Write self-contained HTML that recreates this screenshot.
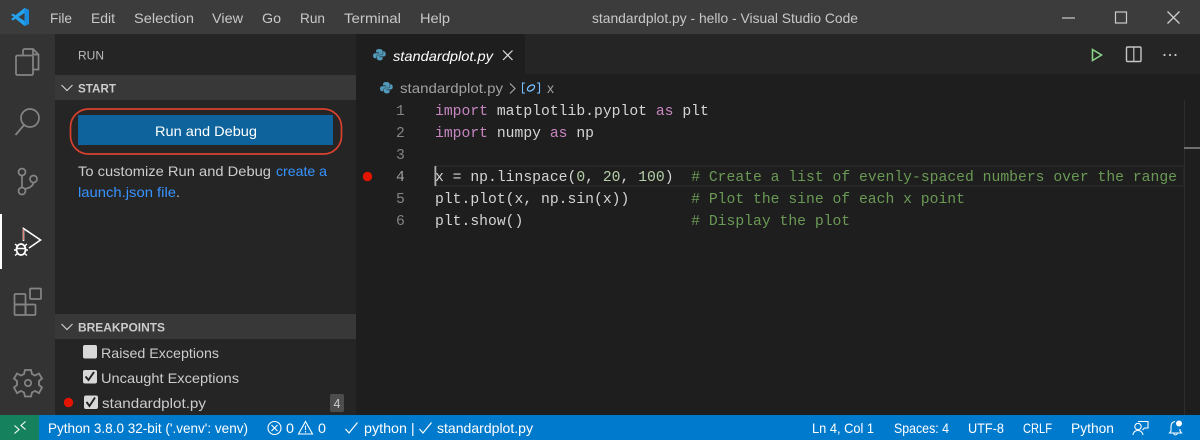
<!DOCTYPE html>
<html><head><meta charset="utf-8"><title>VS Code</title>
<style>
html,body{margin:0;padding:0;width:1200px;height:440px;overflow:hidden;background:#1e1e1e}
svg{display:block}
text{font-family:"Liberation Sans",sans-serif;font-size:14px;white-space:pre}
.m{fill:#c8c8c8}
.s{fill:#fff;font-size:13.5px}
.c{font-family:"Liberation Mono",monospace;font-size:14.72px;fill:#d4d4d4}
.n{font-family:"Liberation Mono",monospace;font-size:14.7px;fill:#858585}
.k{fill:#c586c0}.g{fill:#6a9955}.d{fill:#b5cea8}
.i{fill:none;stroke:#858585;stroke-width:1.7}
.t{fill:#ccc}
</style></head><body>
<svg width="1200" height="440" viewBox="0 0 1200 440" xmlns="http://www.w3.org/2000/svg">
<rect width="1200" height="440" fill="#1e1e1e"/>
<rect width="1200" height="34" fill="#3c3c3c"/>
<rect x="0" y="34" width="55" height="381" fill="#333"/>
<rect x="55" y="34" width="301" height="381" fill="#252526"/>
<rect x="356" y="34" width="844" height="40" fill="#252526"/>
<rect x="356" y="34" width="169" height="40" fill="#1e1e1e"/>
<rect x="0" y="415" width="1200" height="25" fill="#007acc"/>
<rect x="0" y="415" width="39" height="25" fill="#16825d"/>

<!-- logo -->
<path d="M24.500 8L29 10V24L24.500 26L15.500 18.700L13 20.500L11 19L14 17L11 15L13 13.500L15.500 15.300ZM24.500 13L18.500 17L24.500 21Z" fill="#24a2ee" fill-rule="evenodd"/>
<path d="M24.500 8L29 10V24L24.500 26V21V13Z" fill="#1a8ce0"/>

<!-- menu -->
<g class="m">
<text x="50" y="23" textLength="22" lengthAdjust="spacingAndGlyphs">File</text>
<text x="91" y="23" textLength="24" lengthAdjust="spacingAndGlyphs">Edit</text>
<text x="134" y="23" textLength="60" lengthAdjust="spacingAndGlyphs">Selection</text>
<text x="212" y="23" textLength="31" lengthAdjust="spacingAndGlyphs">View</text>
<text x="262" y="23" textLength="19" lengthAdjust="spacingAndGlyphs">Go</text>
<text x="300" y="23" textLength="25" lengthAdjust="spacingAndGlyphs">Run</text>
<text x="344" y="23" textLength="57" lengthAdjust="spacingAndGlyphs">Terminal</text>
<text x="420" y="23" textLength="30" lengthAdjust="spacingAndGlyphs">Help</text>
<text x="592" y="23" textLength="266" lengthAdjust="spacingAndGlyphs">standardplot.py - hello - Visual Studio Code</text>
</g>
<!-- window controls -->
<path d="M1062 18H1075" stroke="#ccc" stroke-width="1.2"/>
<rect x="1115.500" y="12" width="11" height="11" fill="none" stroke="#ccc" stroke-width="1.2"/>
<path d="M1167.500 11.500L1179.500 23.500M1179.500 11.500L1167.500 23.500" stroke="#ccc" stroke-width="1.3"/>

<!-- activity bar -->
<rect x="0" y="214" width="2" height="55" fill="#fff"/>
<g class="i">
<path d="M26 49H33L38.500 54.500V69.500H33M23 55.500V51Q23 49 25 49H26M33 49V54.500H38.500"/>
<path d="M16 57Q16 55.500 17.500 55.500H31.500Q33 55.500 33 57V73.500Q33 75 31.500 75H17.500Q16 75 16 73.500Z"/>
<circle cx="30" cy="118" r="9"/><path d="M24 125L15.500 135" stroke-width="1.8"/>
<circle cx="22" cy="172" r="3.500"/><circle cx="22" cy="191" r="3.500"/><circle cx="33.500" cy="179" r="3.500"/>
<path d="M22 175.500V187.500M33.500 182.500Q33 187 25 189"/>
<rect x="14.500" y="294" width="11" height="10.500" rx="1"/><rect x="14.500" y="304.500" width="11" height="10.500" rx="1"/><rect x="25.500" y="304.500" width="10" height="10.500" rx="1"/>
<rect x="30" y="288.500" width="11" height="10.500" rx="1"/>
<circle cx="28" cy="383" r="3.200"/>
<path d="M25 370H31L32 374L35 375.500L39 373.500L42 378.500L39 381L39 385L42 387.500L39 393L35 391L32 392.500L31 396.500H25L24 392.500L21 391L17 393L14 387.500L17 385L17 381L14 378.500L17 373.500L21 375.500L24 374Z" stroke-width="1.8"/>
</g>
<!-- run debug icon -->
<path d="M23.500 241V228.500L40.500 240L29 248" fill="none" stroke="#fff" stroke-width="1.6"/>
<path d="M23.500 229V240" stroke="#e8605a" stroke-width=".8"/>
<ellipse cx="21" cy="249.500" rx="4.500" ry="5.500" fill="#333" stroke="#fff" stroke-width="1.8"/>
<path d="M15 244L18 246.500M27 244L24 246.500M14 250H17M25 250H28M15 255.500L18 253M27 255.500L24 253M17 248.500H25" stroke="#fff" stroke-width="1.4"/>

<!-- sidebar -->
<text x="78" y="59.500" textLength="26" lengthAdjust="spacingAndGlyphs" style="font-size:12px" fill="#bbb">RUN</text>
<rect x="55" y="75" width="301" height="25" fill="#383838"/>
<path d="M61.500 85L67 90.500L72.500 85" fill="none" stroke="#ccc" stroke-width="1.2"/>
<text x="78" y="92.500" textLength="38" lengthAdjust="spacingAndGlyphs" style="font-size:12px;font-weight:700" fill="#ccc">START</text>
<rect x="78" y="115" width="255" height="30" fill="#0e639c"/>
<rect x="70.500" y="109" width="271" height="45" rx="18" fill="none" stroke="#d9412f" stroke-width="1.700"/>
<text class="s" x="155" y="136" textLength="102" lengthAdjust="spacingAndGlyphs" style="font-size:14px">Run and Debug</text>
<text x="78" y="176" textLength="193" lengthAdjust="spacingAndGlyphs" fill="#ccc">To customize Run and Debug</text>
<text x="276" y="176" textLength="51" lengthAdjust="spacingAndGlyphs" fill="#3794ff">create a</text>
<text x="78" y="197" textLength="98" lengthAdjust="spacingAndGlyphs" fill="#3794ff">launch.json file</text>
<text x="176" y="197" fill="#ccc">.</text>

<rect x="55" y="314" width="301" height="25" fill="#383838"/>
<path d="M61.500 324L67 329.500L72.500 324" fill="none" stroke="#ccc" stroke-width="1.2"/>
<text x="78" y="331.500" textLength="87" lengthAdjust="spacingAndGlyphs" style="font-size:12px;font-weight:700" fill="#ccc">BREAKPOINTS</text>

<rect x="83" y="345" width="14" height="13.500" rx="2" fill="#d8d8d8"/>
<rect x="83" y="370" width="14" height="13.500" rx="2" fill="#d8d8d8"/>
<rect x="84" y="395.500" width="14" height="13.500" rx="2" fill="#d8d8d8"/>
<path d="M85.500 376.500L88.500 380L94 372" fill="none" stroke="#222" stroke-width="1.900"/>
<path d="M86.500 402L89.500 406L95 397.500" fill="none" stroke="#222" stroke-width="1.900"/>
<text x="101" y="358" textLength="118" lengthAdjust="spacingAndGlyphs" fill="#ccc">Raised Exceptions</text>
<text x="101" y="383" textLength="138" lengthAdjust="spacingAndGlyphs" fill="#ccc">Uncaught Exceptions</text>
<text x="102" y="408" textLength="104" lengthAdjust="spacingAndGlyphs" fill="#ccc">standardplot.py</text>
<circle cx="68.500" cy="402.500" r="4.700" fill="#e51400"/>
<rect x="330" y="394" width="14" height="18" rx="2" fill="#4d4d4d"/>
<text x="333.500" y="408" style="font-size:12.500px" fill="#ccc">4</text>

<!-- tab -->
<g transform="translate(373 49) scale(.88) translate(-372 -49.500)">
<path d="M379 49.500C376.500 49.500 375.500 50.500 375.500 52V53.500H379V54.300H374.500C373 54.300 372 55.300 372 57C372 59 373 60 374.500 60H376V58C376 56.800 377 56 378 56H381.500C382.500 56 383 55.300 383 54.500V52C383 50.500 381.500 49.500 379 49.500Z" fill="#519aba"/>
<path d="M379.500 62.500C382 62.500 383 61.500 383 60V58.700H379.500V58H384C385.500 58 386.500 57 386.500 55.300C386.500 53.300 385.500 52 384 52H383.500V54.500C383.500 55.700 382.500 56.500 381.500 56.500H378C377 56.500 376.500 57.200 376.500 58V60C376.500 61.500 377.500 62.500 379.500 62.500Z" fill="#519aba"/>
</g>
<g transform="translate(380 82) scale(.88) translate(-372 -49.500)">
<path d="M379 49.500C376.500 49.500 375.500 50.500 375.500 52V53.500H379V54.300H374.500C373 54.300 372 55.300 372 57C372 59 373 60 374.500 60H376V58C376 56.800 377 56 378 56H381.500C382.500 56 383 55.300 383 54.500V52C383 50.500 381.500 49.500 379 49.500Z" fill="#519aba"/>
<path d="M379.500 62.500C382 62.500 383 61.500 383 60V58.700H379.500V58H384C385.500 58 386.500 57 386.500 55.300C386.500 53.300 385.500 52 384 52H383.500V54.500C383.500 55.700 382.500 56.500 381.500 56.500H378C377 56.500 376.500 57.200 376.500 58V60C376.500 61.500 377.500 62.500 379.500 62.500Z" fill="#519aba"/>
</g>
<text x="393" y="61" textLength="100" lengthAdjust="spacingAndGlyphs" style="font-style:italic" fill="#fff">standardplot.py</text>
<path d="M503 50.500L512.500 60M512.500 50.500L503 60" stroke="#ddd" stroke-width="1.2"/>
<path d="M1092.500 49.500L1101.500 55L1092.500 60.500Z" fill="none" stroke="#89d185" stroke-width="1.6"/>
<rect x="1126.500" y="47" width="14.500" height="14.500" rx="1" fill="none" stroke="#c5c5c5" stroke-width="1.400"/>
<path d="M1133.800 47V61.500" stroke="#c5c5c5" stroke-width="1.200"/>
<circle cx="1164.500" cy="55" r="1.100" fill="#c5c5c5"/><circle cx="1170" cy="55" r="1.100" fill="#c5c5c5"/><circle cx="1175.500" cy="55" r="1.100" fill="#c5c5c5"/>

<!-- breadcrumb -->
<text x="400" y="93" textLength="103" lengthAdjust="spacingAndGlyphs" fill="#a0a0a0">standardplot.py</text>
<path d="M510 83.500L515 88.500L510 93.500" fill="none" stroke="#aaa" stroke-width="1.100"/>
<path d="M525 83H522.500V93H525M537 83H539.500V93H537" fill="none" stroke="#75beff" stroke-width="1.100"/>
<ellipse cx="531" cy="88" rx="4" ry="2.500" fill="none" stroke="#75beff" stroke-width="1.300" transform="rotate(-35 531 88)"/>
<text x="547" y="93" fill="#a0a0a0" style="font-size:14px">x</text>

<!-- editor -->
<rect x="435" y="166" width="749" height="20" fill="none" stroke="#282828" stroke-width="1.500"/>
<rect x="434.500" y="166" width="1.800" height="20" fill="#aeafad"/>
<circle cx="367.500" cy="176.500" r="4.700" fill="#e51400"/>
<text class="n" x="396" y="115">1</text><text class="n" x="396" y="137">2</text><text class="n" x="396" y="159">3</text>
<text class="n" x="396" y="181" style="fill:#a0a0a0">4</text><text class="n" x="396" y="203">5</text><text class="n" x="396" y="225">6</text>
<text class="c" x="435" y="115"><tspan class="k">import</tspan> matplotlib.pyplot <tspan class="k">as</tspan> plt</text>
<text class="c" x="435" y="137"><tspan class="k">import</tspan> numpy <tspan class="k">as</tspan> np</text>
<text class="c" x="435" y="181">x = np.linspace(<tspan class="d">0</tspan>, <tspan class="d">20</tspan>, <tspan class="d">100</tspan>)  <tspan class="g"># Create a list of evenly-spaced numbers over the range</tspan></text>
<text class="c" x="435" y="203">plt.plot(x, np.sin(x))       <tspan class="g"># Plot the sine of each x point</tspan></text>
<text class="c" x="435" y="225">plt.show()                   <tspan class="g"># Display the plot</tspan></text>
<path d="M1184.500 100V415" stroke="#2e2e2e"/>
<rect x="1184" y="147" width="16" height="2" fill="#6e6e6e"/>

<!-- status bar -->
<path d="M14.500 425.500L19 429.500L14.500 433.500M25.500 421.500L21 425.500L25.500 429.500" fill="none" stroke="#fff" stroke-width="1.100"/>
<g fill="#fff">
<text x="48" y="433" textLength="200" lengthAdjust="spacingAndGlyphs">Python 3.8.0 32-bit ('.venv': venv)</text>
<text x="286" y="433" textLength="8" lengthAdjust="spacingAndGlyphs">0</text>
<text x="318" y="433" textLength="8" lengthAdjust="spacingAndGlyphs">0</text>
<text x="364" y="433" textLength="43" lengthAdjust="spacingAndGlyphs">python</text>
<text x="411" y="433">|</text>
<text x="437" y="433" textLength="96" lengthAdjust="spacingAndGlyphs">standardplot.py</text>
<text x="812" y="433" textLength="62" lengthAdjust="spacingAndGlyphs">Ln 4, Col 1</text>
<text x="894" y="433" textLength="55" lengthAdjust="spacingAndGlyphs">Spaces: 4</text>
<text x="968" y="433" textLength="36" lengthAdjust="spacingAndGlyphs">UTF-8</text>
<text x="1023" y="433" textLength="29" lengthAdjust="spacingAndGlyphs">CRLF</text>
<text x="1071" y="433" textLength="43" lengthAdjust="spacingAndGlyphs">Python</text>
</g>
<g fill="none" stroke="#fff" stroke-width="1.100">
<circle cx="274.500" cy="428" r="6.500"/><path d="M271.500 425L277.500 431M277.500 425L271.500 431"/>
<path d="M305.500 421.500L312.500 434H298.500Z"/><path d="M305.500 425.500V430M305.500 431V432.500"/>
<path d="M345.500 429L349 433L357.500 422.500" stroke-width="1.200"/>
<path d="M419.500 429L423 433L431.500 422.500" stroke-width="1.200"/>
<circle cx="1138" cy="426.500" r="3.200"/><path d="M1133 435Q1133.500 430.500 1138 430.500Q1142 430.500 1143 435"/>
<path d="M1138 421.500H1148V428H1144.500L1142.500 430"/>
<path d="M1175 421.500Q1171 422 1171 427V431L1169.500 433H1181.500L1180 431V429M1173.500 433.500Q1175.500 436.500 1177.500 433.500"/>
</g>
<circle cx="1179" cy="423.500" r="3" fill="#fff"/>
</svg>
</body></html>
